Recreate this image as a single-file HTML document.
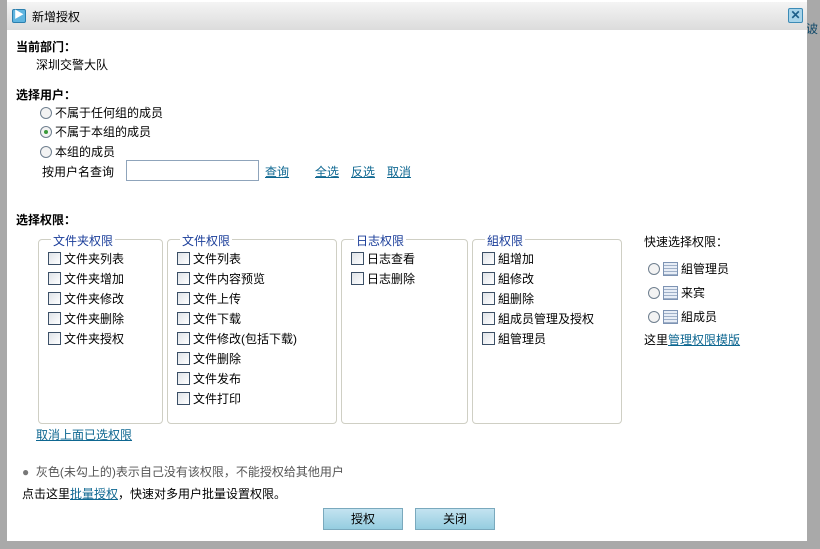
<!DOCTYPE html>
<html><head><meta charset="utf-8"><style>
*{margin:0;padding:0;box-sizing:border-box}
body{width:820px;height:549px;background:#a9a9a9;position:relative;overflow:hidden;font:12px "Liberation Sans","Noto Sans CJK SC",sans-serif;color:#000}
.a{position:absolute;white-space:nowrap}
.dlg{position:absolute;left:7px;top:0;width:800px;height:541px;background:#fff}
.tb{position:absolute;left:7px;top:2px;width:800px;height:28px;background:linear-gradient(#f4f4f4,#dcdcdc)}
b{font-weight:bold}
a,.lk{color:#0e6791;text-decoration:underline}
.rd{display:inline-block;width:12px;height:12px;border:1px solid #6f7f8f;border-radius:50%;background:#f3f3f3;vertical-align:-2px;margin-right:3px;position:relative}
.rd.on::after{content:"";position:absolute;left:3px;top:3px;width:4px;height:4px;border-radius:50%;background:#3a9a3a}
.cb{display:inline-block;width:13px;height:13px;border:1px solid #3b4f66;background:linear-gradient(135deg,#dfe3e8,#fff);vertical-align:-2px;margin-right:3px}
.fs{position:absolute;top:239px;height:185px;border:1px solid #cfcfc4;border-radius:4px}
.lg{position:absolute;top:-8px;background:#fff;color:#1b3e9a;padding:0 2px}
.it{position:absolute;white-space:nowrap}
.btn{position:absolute;top:508px;width:80px;height:22px;border:1px solid #7aa9bd;background:linear-gradient(#c3e3f0,#95cde0);text-align:center;line-height:20px}
.ic{display:inline-block;width:15px;height:14px;border:1px solid #7d93b3;background:repeating-linear-gradient(#e7edf6 0 2px,#9fb0c8 2px 3px);vertical-align:-3px;margin-right:3px}
</style></head><body>
<div class="a" style="left:806px;top:20px;color:#124a6a;font-size:12px">诐</div>
<div class="dlg"></div>
<div class="tb"></div>
<div class="a" style="left:12px;top:9px;width:14px;height:14px;border:1px solid #2b7fae;background:#5fb5e0;border-radius:2px;color:#fff;font-size:10px;line-height:12px;text-align:center">▶</div>
<div class="a" style="left:32px;top:8px">新增授权</div>
<div class="a" style="left:788px;top:8px;width:15px;height:15px;border:1px solid #3c8bb6;background:#a7d4ea;border-radius:2px;color:#1c5f8a;font-size:12px;line-height:13px;text-align:center;font-weight:bold">✕</div>

<div class="a" style="left:16px;top:38px"><b>当前部门：</b></div>
<div class="a" style="left:36px;top:56px">深圳交警大队</div>
<div class="a" style="left:16px;top:86px"><b>选择用户：</b></div>
<div class="a" style="left:40px;top:104px"><span class="rd"></span>不属于任何组的成员</div>
<div class="a" style="left:40px;top:123px"><span class="rd on"></span>不属于本组的成员</div>
<div class="a" style="left:40px;top:143px"><span class="rd"></span>本组的成员</div>
<div class="a" style="left:42px;top:163px">按用户名查询</div>
<div class="a" style="left:126px;top:160px;width:133px;height:21px;border:1px solid #8fa4bb"></div>
<div class="a" style="left:265px;top:163px"><a>查询</a></div>
<div class="a" style="left:315px;top:163px"><a>全选</a></div>
<div class="a" style="left:351px;top:163px"><a>反选</a></div>
<div class="a" style="left:387px;top:163px"><a>取消</a></div>

<div class="a" style="left:16px;top:211px"><b>选择权限：</b></div>

<div class="fs" style="left:38px;width:125px"><span class="lg" style="left:12px">文件夹权限</span>
<div class="it" style="left:9px;top:10px"><span class="cb"></span>文件夹列表</div>
<div class="it" style="left:9px;top:30px"><span class="cb"></span>文件夹增加</div>
<div class="it" style="left:9px;top:50px"><span class="cb"></span>文件夹修改</div>
<div class="it" style="left:9px;top:70px"><span class="cb"></span>文件夹删除</div>
<div class="it" style="left:9px;top:90px"><span class="cb"></span>文件夹授权</div>
</div>
<div class="fs" style="left:167px;width:170px"><span class="lg" style="left:12px">文件权限</span>
<div class="it" style="left:9px;top:10px"><span class="cb"></span>文件列表</div>
<div class="it" style="left:9px;top:30px"><span class="cb"></span>文件内容预览</div>
<div class="it" style="left:9px;top:50px"><span class="cb"></span>文件上传</div>
<div class="it" style="left:9px;top:70px"><span class="cb"></span>文件下载</div>
<div class="it" style="left:9px;top:90px"><span class="cb"></span>文件修改(包括下载)</div>
<div class="it" style="left:9px;top:110px"><span class="cb"></span>文件删除</div>
<div class="it" style="left:9px;top:130px"><span class="cb"></span>文件发布</div>
<div class="it" style="left:9px;top:150px"><span class="cb"></span>文件打印</div>
</div>
<div class="fs" style="left:341px;width:127px"><span class="lg" style="left:12px">日志权限</span>
<div class="it" style="left:9px;top:10px"><span class="cb"></span>日志查看</div>
<div class="it" style="left:9px;top:30px"><span class="cb"></span>日志删除</div>
</div>
<div class="fs" style="left:472px;width:150px"><span class="lg" style="left:12px">組权限</span>
<div class="it" style="left:9px;top:10px"><span class="cb"></span>組增加</div>
<div class="it" style="left:9px;top:30px"><span class="cb"></span>組修改</div>
<div class="it" style="left:9px;top:50px"><span class="cb"></span>組删除</div>
<div class="it" style="left:9px;top:70px"><span class="cb"></span>組成员管理及授权</div>
<div class="it" style="left:9px;top:90px"><span class="cb"></span>組管理员</div>
</div>

<div class="a" style="left:644px;top:233px">快速选择权限：</div>
<div class="a" style="left:648px;top:260px"><span class="rd"></span><span class="ic"></span>組管理员</div>
<div class="a" style="left:648px;top:284px"><span class="rd"></span><span class="ic"></span>来宾</div>
<div class="a" style="left:648px;top:308px"><span class="rd"></span><span class="ic"></span>組成员</div>
<div class="a" style="left:644px;top:331px">这里<a>管理权限模版</a></div>

<div class="a" style="left:36px;top:426px"><a>取消上面已选权限</a></div>
<div class="a" style="left:22px;top:463px;color:#555"><span style="color:#777">●</span>&nbsp; 灰色(未勾上的)表示自己没有该权限，不能授权给其他用户</div>
<div class="a" style="left:22px;top:485px">点击这里<a>批量授权</a>，快速对多用户批量设置权限。</div>
<div class="btn" style="left:323px">授权</div>
<div class="btn" style="left:415px">关闭</div>
</body></html>
